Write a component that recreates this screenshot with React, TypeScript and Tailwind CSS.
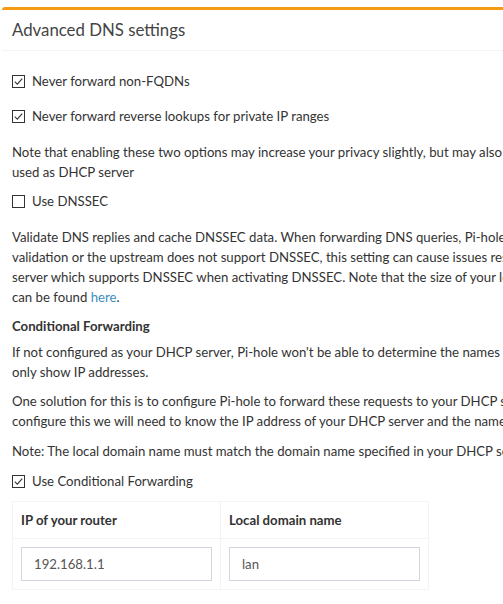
import React from "react";

const font = { fontFamily: "Lato, 'Noto Sans', sans-serif" };

function Check({ checked }: { checked: boolean }) {
  return (
    <svg width="13" height="13" viewBox="0 0 13 13" className="shrink-0">
      <rect x="0.5" y="0.5" width="12" height="12" fill="#fff" stroke="#333" strokeWidth="1" />
      {checked && (
        <path d="M2.8 6.6 L5.3 9.1 L10.2 3.6" fill="none" stroke="#333" strokeWidth="1.1" />
      )}
    </svg>
  );
}

function CheckRow({ checked, label, className }: { checked: boolean; label: string; className: string }) {
  return (
    <div className={`flex items-center h-[20px] ${className}`}>
      <Check checked={checked} />
      <span className="ml-[7px] whitespace-nowrap">{label}</span>
    </div>
  );
}

export default function App() {
  return (
    <div className="w-full h-screen overflow-hidden bg-white text-[13.2px] leading-[20px] text-[#333]" style={font}>
      <div className="w-[1000px] pl-[2px] pt-[7px]">
        <div className="border-t-[3px] border-[#f39c12] rounded-tl-[3px] bg-white">
          <div className="px-[10px] py-[10px] border-b border-[#f4f4f4]">
            <h3 className="text-[16.8px] leading-[20px] text-[#444] m-0">Advanced DNS settings</h3>
          </div>
          <div className="p-[10px] whitespace-nowrap">
            <CheckRow checked label="Never forward non-FQDNs" className="mt-[10px]" />
            <CheckRow checked label="Never forward reverse lookups for private IP ranges" className="mt-[15px]" />
            <p className="mt-[16px]">
              Note that enabling these two options may increase your privacy slightly, but may also prevent you from being able to access local hostnames if the Pi-hole is not
              <br />
              used as DHCP server
            </p>
            <CheckRow checked={false} label="Use DNSSEC" className="mt-[9px]" />
            <p className="mt-[16px]">
              Validate DNS replies and cache DNSSEC data. When forwarding DNS queries, Pi-hole requests the DNSSEC records necessary to validate the replies. If a domain fails
              <br />
              validation or the upstream does not support DNSSEC, this setting can cause issues resolving domains. Use an upstream DNS
              <br />
              server which supports DNSSEC when activating DNSSEC. Note that the size of your log might increase significantly when enabling DNSSEC. A DNSSEC resolver test
              <br />
              can be found <a className="text-[#3c8dbc]" href="#">here</a>.
            </p>
            <div className="mt-[9px] font-bold">Conditional Forwarding</div>
            <p className="mt-[6px]">
              If not configured as your DHCP server, Pi-hole won't be able to determine the names of devices on your local network. As a result, tables such as Top Clients will
              <br />
              only show IP addresses.
            </p>
            <p className="mt-[9px]">
              One solution for this is to configure Pi-hole to forward these requests to your DHCP server (most likely your router), but only for devices on your home network. To
              <br />
              configure this we will need to know the IP address of your DHCP server and the name of your local network.
            </p>
            <p className="mt-[10px]">
              Note: The local domain name must match the domain name specified in your DHCP server, likely found within the DHCP settings.
            </p>
            <CheckRow checked label="Use Conditional Forwarding" className="mt-[10px]" />
            <div className="mt-[10px] w-[417px] border border-[#f4f4f4] grid grid-cols-[208px_207px]">
              <div className="p-[8px] font-bold border-r border-b border-[#f4f4f4]">IP of your router</div>
              <div className="p-[8px] font-bold border-b border-[#f4f4f4]">Local domain name</div>
              <div className="p-[8px] border-r border-[#f4f4f4]">
                <input
                  readOnly
                  defaultValue="192.168.1.1"
                  className="w-full h-[34px] border border-[#d2d6de] px-[12px] text-[13.2px] text-[#555] outline-none"
                  style={font}
                />
              </div>
              <div className="p-[8px]">
                <input
                  readOnly
                  defaultValue="lan"
                  className="w-full h-[34px] border border-[#d2d6de] px-[12px] text-[13.2px] text-[#555] outline-none"
                  style={font}
                />
              </div>
            </div>
          </div>
        </div>
      </div>
    </div>
  );
}
